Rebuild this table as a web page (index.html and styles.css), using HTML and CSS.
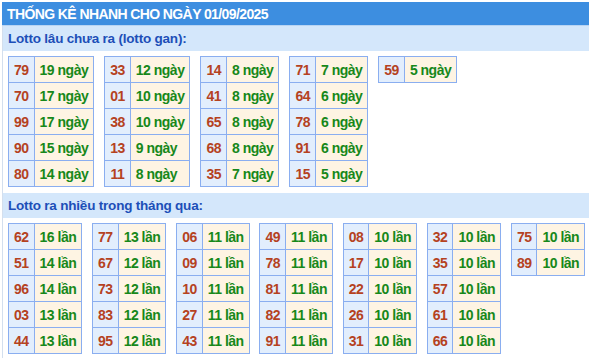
FILE: index.html
```html
<!DOCTYPE html>
<html lang="vi">
<head>
<meta charset="utf-8">
<title>Thống kê nhanh</title>
<link rel="stylesheet" href="styles.css">
</head>
<body>
<div class="box">
  <div class="title">THỐNG KÊ NHANH CHO NGÀY 01/09/2025</div>
  <div class="band">Lotto lâu chưa ra (lotto gan):</div>
  <div class="grid grid-gan">
    <table class="lt"><tr><td class="n">79</td><td class="v">19 ngày</td></tr><tr><td class="n">70</td><td class="v">17 ngày</td></tr><tr><td class="n">99</td><td class="v">17 ngày</td></tr><tr><td class="n">90</td><td class="v">15 ngày</td></tr><tr><td class="n">80</td><td class="v">14 ngày</td></tr></table>
    <table class="lt"><tr><td class="n">33</td><td class="v">12 ngày</td></tr><tr><td class="n">01</td><td class="v">10 ngày</td></tr><tr><td class="n">38</td><td class="v">10 ngày</td></tr><tr><td class="n">13</td><td class="v">9 ngày</td></tr><tr><td class="n">11</td><td class="v">8 ngày</td></tr></table>
    <table class="lt"><tr><td class="n">14</td><td class="v">8 ngày</td></tr><tr><td class="n">41</td><td class="v">8 ngày</td></tr><tr><td class="n">65</td><td class="v">8 ngày</td></tr><tr><td class="n">68</td><td class="v">8 ngày</td></tr><tr><td class="n">35</td><td class="v">7 ngày</td></tr></table>
    <table class="lt"><tr><td class="n">71</td><td class="v">7 ngày</td></tr><tr><td class="n">64</td><td class="v">6 ngày</td></tr><tr><td class="n">78</td><td class="v">6 ngày</td></tr><tr><td class="n">91</td><td class="v">6 ngày</td></tr><tr><td class="n">15</td><td class="v">5 ngày</td></tr></table>
    <table class="lt"><tr><td class="n">59</td><td class="v">5 ngày</td></tr></table>
  </div>
  <div class="band">Lotto ra nhiều trong tháng qua:</div>
  <div class="grid grid-nhieu">
    <table class="lt"><tr><td class="n">62</td><td class="v">16 lần</td></tr><tr><td class="n">51</td><td class="v">14 lần</td></tr><tr><td class="n">96</td><td class="v">14 lần</td></tr><tr><td class="n">03</td><td class="v">13 lần</td></tr><tr><td class="n">44</td><td class="v">13 lần</td></tr></table>
    <table class="lt"><tr><td class="n">77</td><td class="v">13 lần</td></tr><tr><td class="n">67</td><td class="v">12 lần</td></tr><tr><td class="n">73</td><td class="v">12 lần</td></tr><tr><td class="n">83</td><td class="v">12 lần</td></tr><tr><td class="n">95</td><td class="v">12 lần</td></tr></table>
    <table class="lt"><tr><td class="n">06</td><td class="v">11 lần</td></tr><tr><td class="n">09</td><td class="v">11 lần</td></tr><tr><td class="n">10</td><td class="v">11 lần</td></tr><tr><td class="n">27</td><td class="v">11 lần</td></tr><tr><td class="n">43</td><td class="v">11 lần</td></tr></table>
    <table class="lt"><tr><td class="n">49</td><td class="v">11 lần</td></tr><tr><td class="n">78</td><td class="v">11 lần</td></tr><tr><td class="n">81</td><td class="v">11 lần</td></tr><tr><td class="n">82</td><td class="v">11 lần</td></tr><tr><td class="n">91</td><td class="v">11 lần</td></tr></table>
    <table class="lt"><tr><td class="n">08</td><td class="v">10 lần</td></tr><tr><td class="n">17</td><td class="v">10 lần</td></tr><tr><td class="n">22</td><td class="v">10 lần</td></tr><tr><td class="n">26</td><td class="v">10 lần</td></tr><tr><td class="n">31</td><td class="v">10 lần</td></tr></table>
    <table class="lt"><tr><td class="n">32</td><td class="v">10 lần</td></tr><tr><td class="n">35</td><td class="v">10 lần</td></tr><tr><td class="n">57</td><td class="v">10 lần</td></tr><tr><td class="n">61</td><td class="v">10 lần</td></tr><tr><td class="n">66</td><td class="v">10 lần</td></tr></table>
    <table class="lt"><tr><td class="n">75</td><td class="v">10 lần</td></tr><tr><td class="n">89</td><td class="v">10 lần</td></tr></table>
  </div>
</div>
</body>
</html>
```

FILE: styles.css
```css
html, body {
  margin: 0;
  padding: 0;
  background: #ffffff;
  overflow: hidden;
}

body {
  font-family: "Liberation Sans", Arial, sans-serif;
  font-size: 13px;
  font-weight: bold;
}

.box {
  margin: 2px 0 0 2px;
  width: 600px;
  min-height: 400px;
  border-left: 1px solid #d3dfee;
}

.title {
  margin-left: -1px;
  height: 23px;
  line-height: 24px;
  padding-left: 5px;
  background: #3d8ee0;
  color: #ffffff;
  font-size: 14px;
  letter-spacing: -0.6px;
  border-bottom: 1px solid #b8d4f3;
}

.band {
  height: 25px;
  line-height: 25px;
  padding-left: 5px;
  background: #d4e7fb;
  color: #1d4fb8;
  font-size: 13.5px;
  letter-spacing: -0.2px;
}

.grid {
  display: flex;
  flex-wrap: wrap;
  align-items: flex-start;
  gap: 10px;
  padding: 5px 0 6px 5px;
}

.grid-nhieu {
  gap: 9.8px;
}

.lt {
  border-collapse: collapse;
  font-size: 14px;
  letter-spacing: -0.5px;
}

.lt td {
  height: 25px;
  padding: 0 5px;
  border: 1px solid #8aaef0;
  white-space: nowrap;
}

.lt td.n {
  background: #e2eefd;
  color: #b5421f;
  text-align: center;
}

.lt td.v {
  background: #fef4e3;
  color: #17881a;
}
```
